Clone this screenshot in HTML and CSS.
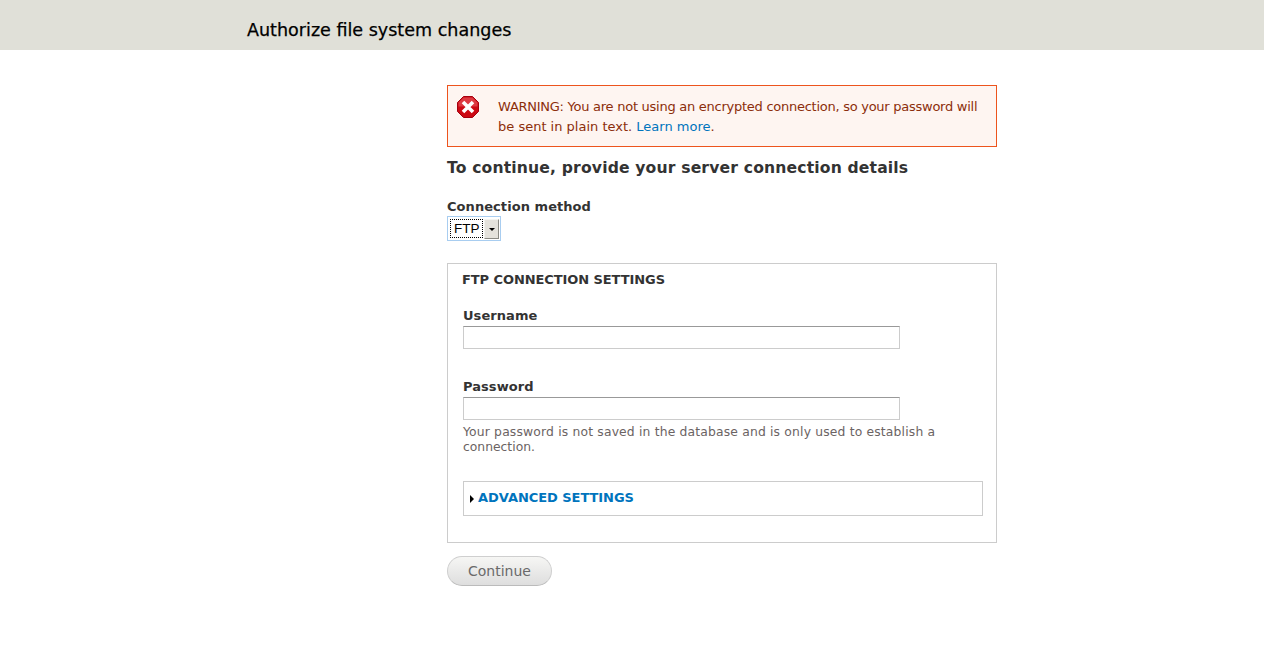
FILE: index.html
```html
<!DOCTYPE html>
<html lang="en">
<head>
<meta charset="utf-8">
<title>Authorize file system changes</title>
<link rel="stylesheet" href="styles.css">
</head>
<body>
<header class="page-header">
  <h1 class="page-title">Authorize file system changes</h1>
</header>
<main class="content">
  <div class="error-box">
    <svg class="error-icon" viewBox="0 0 22 22" width="22" height="22" aria-hidden="true">
      <polygon points="6.5,0.5 15.5,0.5 21.5,6.5 21.5,15.5 15.5,21.5 6.5,21.5 0.5,15.5 0.5,6.5" fill="#cc0a14" stroke="#a5000f" stroke-width="1"/>
      <path d="M6.5 1.5h9l5 5v4H1.5v-4z" fill="#ee6a70" opacity=".5"/>
      <path d="M6 6l10 10M16 6L6 16" stroke="#fff" stroke-width="3.6" fill="none"/>
    </svg>
    <p class="error-text">WARNING: You are not using an encrypted connection, so your password will be sent in plain text. <a href="#">Learn more</a>.</p>
  </div>
  <h2 class="section-title">To continue, provide your server connection details</h2>
  <label class="field-label method-label">Connection method</label>
  <div class="select-ring">
    <div class="select-box">
      <span class="select-value">FTP</span>
      <span class="select-arrow"><i></i></span>
    </div>
  </div>
  <fieldset class="settings">
    <div class="legend">FTP CONNECTION SETTINGS</div>
    <div class="field">
      <label class="field-label">Username</label>
      <div class="text-input"></div>
    </div>
    <div class="field">
      <label class="field-label">Password</label>
      <div class="text-input"></div>
      <div class="description">Your password is not saved in the database and is only used to establish a connection.</div>
    </div>
    <div class="advanced">
      <i class="triangle"></i><a href="#">ADVANCED SETTINGS</a>
    </div>
  </fieldset>
  <button class="continue" type="button">Continue</button>
</main>
</body>
</html>
```
FILE: styles.css
```css
* { box-sizing: border-box; }
html, body { margin: 0; padding: 0; }
body {
  background: #fff;
  color: #333;
  font-family: "DejaVu Sans", Verdana, sans-serif;
  font-size: 13px;
  height: 660px;
  overflow: hidden;
}
.page-header {
  background: #e0e0d8;
  height: 50px;
  padding: 19px 0 0 247px;
}
.page-title {
  margin: 0;
  font-size: 17.55px;
  line-height: 22px;
  font-weight: 400;
  color: #000;
  -webkit-text-stroke: 0.25px #000;
}
.content {
  width: 550px;
  margin-left: 447px;
  padding-top: 35px;
}
.error-box {
  display: flex;
  height: 62px;
  padding: 10px 9px 0 9px;
  border: 1px solid #ed541d;
  background: #fef5f1;
  color: #8c2e0b;
}
.error-icon { flex: none; margin-right: 19px; }
.error-text { margin: 1px 0 0; font-size: 13px; line-height: 20px; }
.error-text::first-line { letter-spacing: -0.26px; }
.error-text a { color: #0074bd; text-decoration: none; }
.section-title {
  margin: 11px 0 0;
  font-size: 15.6px;
  line-height: 20px;
  font-weight: 700;
  color: #333;
  letter-spacing: 0.16px;
}
.field-label {
  display: block;
  font-size: 13px;
  line-height: 16px;
  font-weight: 700;
  color: #333;
  letter-spacing: 0.06px;
}
.method-label { margin-top: 21px; }
.select-ring {
  width: 54px;
  height: 25px;
  margin-top: 1px;
  padding: 1px;
  border: 1px solid #a8cdf0;
  background: #fff;
}
.select-box { display: flex; height: 20px; margin: 0 0 0 1px; }
.select-value {
  width: 33px;
  height: 19px;
  margin-top: 1px;
  border: 1px dotted #000;
  font-family: "Liberation Sans", Arial, sans-serif;
  font-size: 13.5px;
  line-height: 17px;
  color: #000;
  padding-left: 3px;
}
.select-arrow {
  display: flex;
  align-items: center;
  justify-content: center;
  width: 15px;
  height: 20px;
  margin: 1px 0 0 1px;
  background: #e4e2dc;
  border-right: 1px solid #8a8a84;
  border-bottom: 1px solid #8a8a84;
  border-left: 1px solid #f4f4f0;
  border-top: 1px solid #f4f4f0;
}
.select-arrow i {
  width: 0;
  height: 0;
  border: 3px solid transparent;
  border-top: 3px solid #000;
  border-bottom: 0;
}
.settings {
  display: block;
  width: 550px;
  height: 280px;
  margin: 22px 0 0;
  padding: 8px 13px 0 15px;
  border: 1px solid #ccc;
  min-width: 0;
}
.legend {
  margin-left: -1px;
  font-size: 13px;
  line-height: 16px;
  font-weight: 700;
  color: #333;
  letter-spacing: -0.08px;
}
.field { margin-top: 20px; }
.field + .field { margin-top: 30px; }
.text-input {
  width: 437px;
  height: 23px;
  margin-top: 2px;
  border: 1px solid #ccc;
  border-top-color: #999;
}
.description {
  margin-top: 5px;
  width: 500px;
  font-size: 12.35px;
  line-height: 15px;
  color: #6b6363;
}
.description::first-line { letter-spacing: 0.17px; }
.advanced {
  display: flex;
  align-items: center;
  width: 520px;
  height: 35px;
  margin-top: 26px;
  padding: 0 0 2px 6px;
  border: 1px solid #ccc;
}
.triangle {
  width: 0;
  height: 0;
  margin: 2px 4px 0 0;
  border-left: 4px solid #000;
  border-top: 4px solid transparent;
  border-bottom: 4px solid transparent;
}
.advanced a {
  font-size: 13px;
  font-weight: 700;
  color: #0074bd;
  text-decoration: none;
  letter-spacing: -0.05px;
}
.continue {
  display: block;
  width: 105px;
  height: 30px;
  margin-top: 13px;
  padding: 0;
  border: 1px solid #cfcfcf;
  border-bottom-color: #bbb;
  border-radius: 15px;
  background: linear-gradient(#f6f6f4, #dedede);
  font-family: inherit;
  font-size: 14px;
  color: #6a6a6a;
}
```
